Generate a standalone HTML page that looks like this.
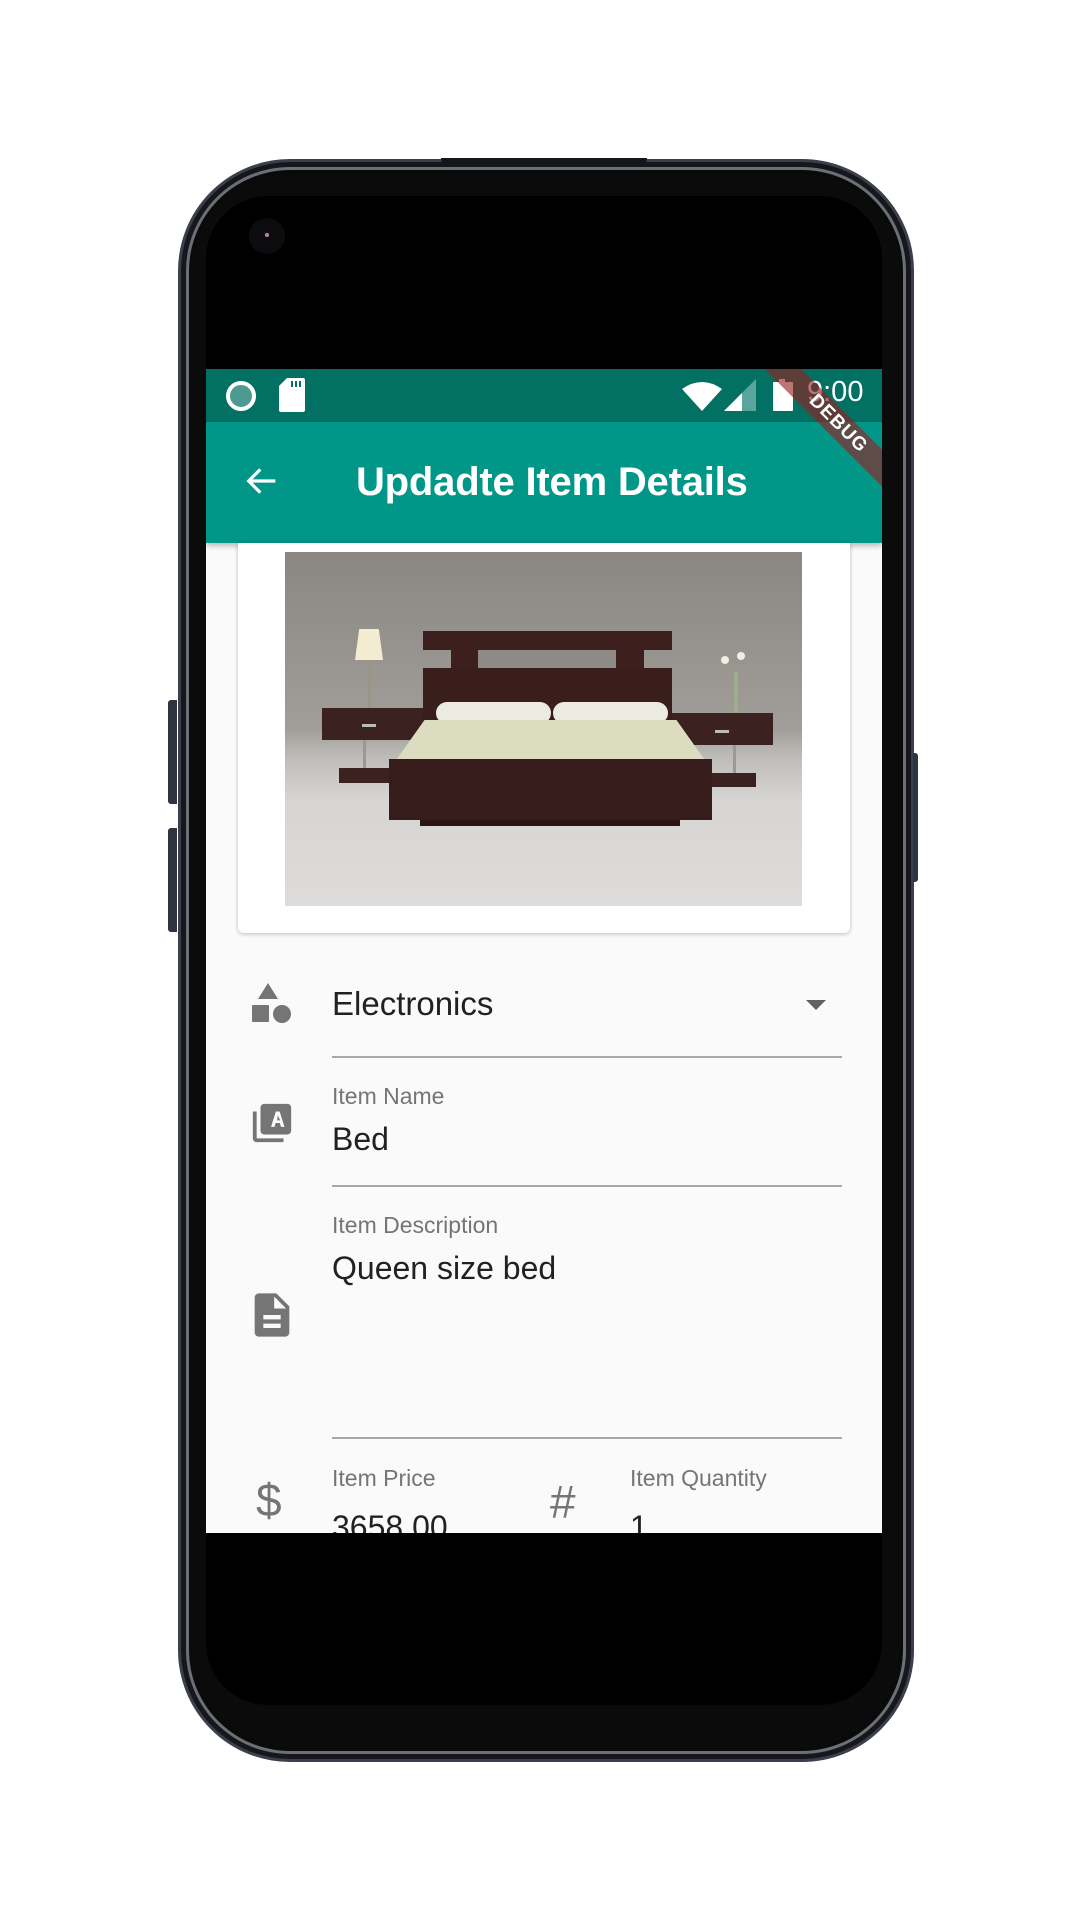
<!DOCTYPE html>
<html><head><meta charset="utf-8"><style>
*{margin:0;padding:0;box-sizing:border-box}
body{width:1080px;height:1920px;background:#fff;position:relative;overflow:hidden;font-family:"Liberation Sans",sans-serif}
.abs{position:absolute}
.phone{left:178px;top:159px;width:736px;height:1603px;border-radius:112px;background:#0b0b0b;border:3px solid #3a3f4b;box-shadow:inset 0 0 0 5px #15171b, inset 0 0 0 8px #6b6f76, inset 0 0 0 12px #0a0a0a}
.inner{left:206px;top:196px;width:676px;height:1509px;border-radius:62px;background:#000}
.screen{left:206px;top:369px;width:676px;height:1164px;background:#fafafa;overflow:hidden}
.lbl{color:#757575;font-size:23px}
.val{color:#212121;font-size:32px}
.line{height:2px;background:#a8a8a8}
</style></head><body>
<div class="abs phone"></div>
<div class="abs" style="left:441px;top:158px;width:206px;height:8px;background:#15161a;border-radius:0 0 8px 8px"></div>
<div class="abs" style="left:168px;top:700px;width:9px;height:104px;background:#2e3440;border-radius:3px 0 0 3px"></div>
<div class="abs" style="left:168px;top:828px;width:9px;height:104px;background:#2e3440;border-radius:3px 0 0 3px"></div>
<div class="abs" style="left:913px;top:753px;width:5px;height:129px;background:#2e3440;border-radius:0 3px 3px 0"></div>
<div class="abs inner"></div>
<div class="abs" style="left:249px;top:218px;width:36px;height:36px;border-radius:50%;background:#0c0c0e"></div>
<div class="abs" style="left:265px;top:233px;width:4px;height:4px;border-radius:50%;background:#b48aa8"></div>

<div class="abs screen">
  <div class="abs" style="left:0;top:0;width:676px;height:53px;background:#027063"></div>
  <div class="abs" style="left:20px;top:12px;width:30px;height:30px;border-radius:50%;border:4px solid #fff;background:#4d9a90"></div>
  <svg class="abs" style="left:73px;top:9px" width="26" height="34" viewBox="0 0 26 34"><path d="M8 0H24a2 2 0 0 1 2 2V32a2 2 0 0 1-2 2H2a2 2 0 0 1-2-2V8Z" fill="#fff"/><path d="M13 3v6M17 3v6M21 3v6" stroke="#027063" stroke-width="2"/></svg>
  <svg class="abs" style="left:476px;top:12px" width="40" height="30" viewBox="0 0 40 30"><path d="M0 8Q20 -6 40 8L20 30Z" fill="#fff"/></svg>
  <svg class="abs" style="left:518px;top:10px" width="32" height="32" viewBox="0 0 32 32"><path d="M32 0V32H0Z" fill="#5aa59b"/><path d="M18 14V32H0Z" fill="#fff"/></svg>
  <div class="abs" style="left:573px;top:10px;width:6px;height:4px;background:#fff"></div>
  <div class="abs" style="left:567px;top:13px;width:20px;height:29px;background:#fff;border-radius:1px"></div>
  <div class="abs" style="left:601px;top:7px;color:#fff;font-size:29px">9:00</div>
  <div class="abs" style="left:0;top:53px;width:676px;height:121px;background:#009688;box-shadow:0 3px 5px rgba(0,0,0,.25)"></div>
  <svg class="abs" style="left:36px;top:92px" width="40" height="40" viewBox="0 0 24 24"><path d="M20 12H4.5M11 5L4 12l7 7" fill="none" stroke="#fff" stroke-width="1.9"/></svg>
  <div class="abs" style="left:150px;top:91px;color:#fff;font-size:40px;font-weight:bold;letter-spacing:-0.2px">Updadte Item Details</div>
  <div class="abs" style="left:527px;top:42px;width:210px;height:26px;background:rgba(150,30,30,.62);transform:rotate(45deg);color:#fff;font-size:19px;font-weight:bold;text-align:center;line-height:26px;letter-spacing:1px">DEBUG</div>

  <div class="abs" style="left:32px;top:174px;width:612px;height:390px;background:#fff;border-radius:0 0 6px 6px;box-shadow:0 1px 4px rgba(0,0,0,.25)"></div>
  <div class="abs" style="left:79px;top:183px;width:517px;height:354px;overflow:hidden;background:linear-gradient(#8a8681 0%,#a19e99 50%,#bebcb9 58%,#d7d5d3 70%,#dddcda 100%)">
    <div class="abs" style="left:83px;top:100px;width:3px;height:60px;background:#9b9488"></div>
    <div class="abs" style="left:70px;top:77px;width:28px;height:31px;background:#f4ecd0;clip-path:polygon(15% 0,85% 0,100% 100%,0 100%)"></div>
    <div class="abs" style="left:37px;top:156px;width:101px;height:32px;background:#3b2220"></div>
    <div class="abs" style="left:77px;top:172px;width:14px;height:3px;background:#bbb"></div>
    <div class="abs" style="left:78px;top:188px;width:3px;height:30px;background:#999"></div>
    <div class="abs" style="left:54px;top:216px;width:50px;height:15px;background:#3b2220"></div>
    <div class="abs" style="left:387px;top:161px;width:101px;height:32px;background:#3b2220"></div>
    <div class="abs" style="left:430px;top:178px;width:14px;height:3px;background:#bbb"></div>
    <div class="abs" style="left:448px;top:193px;width:3px;height:30px;background:#999"></div>
    <div class="abs" style="left:427px;top:221px;width:44px;height:14px;background:#3b2220"></div>
    <div class="abs" style="left:449px;top:120px;width:4px;height:40px;background:#9bb08a"></div>
    <div class="abs" style="left:436px;top:104px;width:8px;height:8px;border-radius:50%;background:#f0f0e0"></div>
    <div class="abs" style="left:452px;top:100px;width:8px;height:8px;border-radius:50%;background:#f0f0e0"></div>
    <div class="abs" style="left:138px;top:79px;width:249px;height:19px;background:#3d1f1d"></div>
    <div class="abs" style="left:166px;top:98px;width:193px;height:18px;background:#3d1f1d"></div>
    <div class="abs" style="left:193px;top:98px;width:138px;height:18px;background:#8e8a85"></div>
    <div class="abs" style="left:138px;top:116px;width:249px;height:106px;background:#3a1e1c"></div>
    <div class="abs" style="left:151px;top:150px;width:115px;height:22px;background:#ecebe1;border-radius:12px"></div>
    <div class="abs" style="left:268px;top:150px;width:115px;height:22px;background:#ecebe1;border-radius:12px"></div>
    <div class="abs" style="left:104px;top:168px;width:323px;height:50px;background:#dcdcc0;clip-path:polygon(11% 0,89% 0,100% 100%,0 100%)"></div>
    <div class="abs" style="left:104px;top:207px;width:323px;height:61px;background:#361c1a"></div>
    <div class="abs" style="left:135px;top:268px;width:260px;height:6px;background:#2a1514"></div>
  </div>

  <svg class="abs" style="left:46px;top:614px" width="40" height="44" viewBox="0 0 40 44"><path d="M16 0L26 16H6Z" fill="#757575"/><rect x="0" y="22" width="17" height="17" rx="1" fill="#757575"/><circle cx="30" cy="31" r="9" fill="#757575"/></svg>
  <div class="abs val" style="left:126px;top:616px;font-size:33px">Electronics</div>
  <svg class="abs" style="left:600px;top:631px" width="20" height="10" viewBox="0 0 20 10"><path d="M0 0H20L10 10Z" fill="#616161"/></svg>
  <div class="abs line" style="left:126px;top:687px;width:510px"></div>

  <svg class="abs" style="left:43px;top:731px" width="46" height="46" viewBox="0 0 24 24"><path d="M4 6H2v14c0 1.1.9 2 2 2h14v-2H4V6zm16-4H8c-1.1 0-2 .9-2 2v12c0 1.1.9 2 2 2h12c1.1 0 2-.9 2-2V4c0-1.1-.9-2-2-2zm-8.5 12L14 6h2l2.5 8h-1.8l-.6-2h-2.2l-.6 2h-1.8zm3.2-3.4h1.6L15 8z" fill="#757575"/></svg>
  <div class="abs lbl" style="left:126px;top:714px">Item Name</div>
  <div class="abs val" style="left:126px;top:752px">Bed</div>
  <div class="abs line" style="left:126px;top:816px;width:510px"></div>

  <svg class="abs" style="left:40px;top:920px" width="52" height="52" viewBox="0 0 24 24"><path d="M14 2H6c-1.1 0-2 .9-2 2v16c0 1.1.9 2 2 2h12c1.1 0 2-.9 2-2V8l-6-6zm2 16H8v-2h8v2zm0-4H8v-2h8v2zm-3-5V3.5L18.5 9H13z" fill="#757575"/></svg>
  <div class="abs lbl" style="left:126px;top:843px">Item Description</div>
  <div class="abs val" style="left:126px;top:881px">Queen size bed</div>
  <div class="abs line" style="left:126px;top:1068px;width:510px"></div>

  <div class="abs" style="left:50px;top:1104px;color:#757575;font-size:46px">$</div>
  <div class="abs lbl" style="left:126px;top:1096px">Item Price</div>
  <div class="abs val" style="left:126px;top:1140px">3658.00</div>
  <div class="abs" style="left:344px;top:1106px;color:#757575;font-size:46px">#</div>
  <div class="abs lbl" style="left:424px;top:1096px">Item Quantity</div>
  <div class="abs val" style="left:424px;top:1140px">1</div>
</div>
</body></html>
